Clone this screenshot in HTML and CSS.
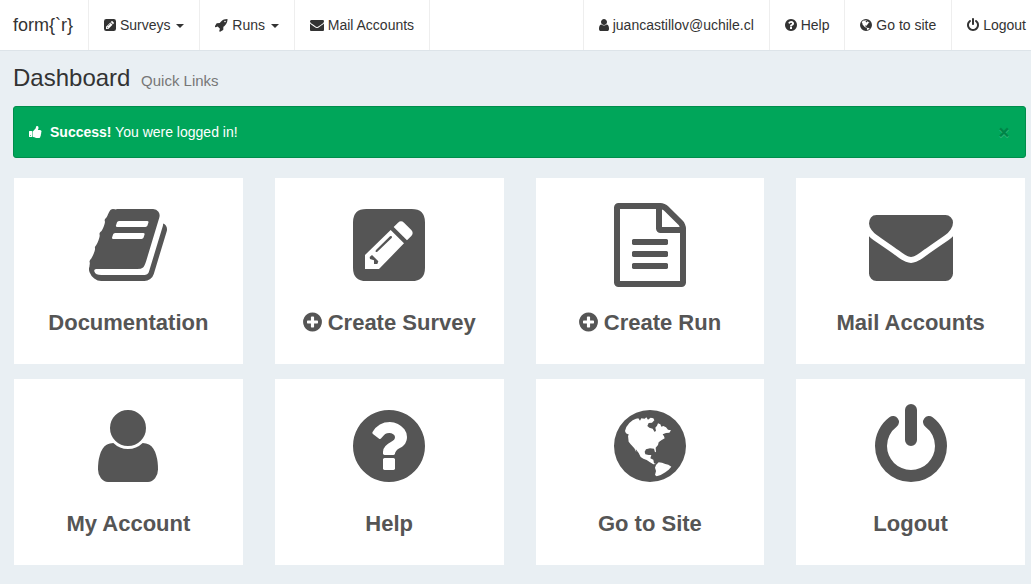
FILE: index.html
```html
<!DOCTYPE html>
<html lang="en">
<head>
<meta charset="utf-8">
<meta name="viewport" content="width=device-width, initial-scale=1">
<title>form{`r} Dashboard</title>
<link rel="stylesheet" href="styles.css">
</head>
<body>
<svg class="sprite" aria-hidden="true">
  <symbol id="book" viewBox="64 0 1664 1792"><path d="M1703 478q40 57 18 129l-275 906q-19 64-76.500 107.500t-122.500 43.500h-923q-77 0-148.500-53.500t-99.500-131.500q-24-67-2-127 0-4 3-27t4-37q1-8-3-21.500t-3-19.500q2-11 8-21t16.500-23.500 16.500-23.500q23-38 45-91.500t30-91.500q3-10 .5-30t-.5-28q3-11 17-28t17-23q21-36 42-92t25-90q1-9-2.500-32t.5-28q4-13 22-30.500t22-22.500q19-26 42.500-84.500t27.500-96.500q1-8-3-25.500t-2-26.500q2-8 9-18t18-23 17-21q8-12 16.500-30.500t15-35 16-36 19.500-32 26.500-23.500 36-11.500 47.500 5.500l-1 3q38-9 51-9h761q74 0 114 56t18 130l-274 906q-36 119-71.500 153.500t-128.500 34.500h-869q-27 0-38 15-11 16-1 43 24 70 144 70h923q29 0 56-15.500t35-41.500l300-987q7-22 5-57 38 15 59 43zm-1064 2q-4 13 2 22.500t20 9.500h608q13 0 25.500-9.500t16.500-22.500l21-64q4-13-2-22.500t-20-9.500h-608q-13 0-25.500 9.500t-16.500 22.500zm-83 256q-4 13 2 22.500t20 9.500h608q13 0 25.500-9.500t16.500-22.500l21-64q4-13-2-22.500t-20-9.500h-608q-13 0-25.500 9.500t-16.500 22.500z"/></symbol>
  <symbol id="pencil" viewBox="280 39 216 252"><path fill-rule="evenodd" d="M320 57H456Q496 57 496 97V233Q496 273 456 273H320Q280 273 280 233V97Q280 57 320 57ZM316 195V237H358L433 160L393 120ZM402 111L442 151L455 138Q463 129 455 120L433 98Q424 90 415 98ZM349 180L391 139Q394 137 396 139Q398 141 396 144L353 185Q350 187 348 185Q347 183 349 180ZM337 195L356 214L353 222H343V211L331 207L330 201Z"/></symbol>
  <symbol id="file" viewBox="128 0 1536 1792"><path d="M1596 380q28 28 48 76t20 88v1152q0 40-28 68t-68 28h-1344q-40 0-68-28t-28-68v-1600q0-40 28-68t68-28h896q40 0 88 20t76 48zm-444-244v376h376q-10-29-22-41l-313-313q-12-12-41-22zm384 1528v-1024h-416q-40 0-68-28t-28-68v-416h-768v1536h1280zm-1024-864q0-14 9-23t23-9h704q14 0 23 9t9 23v64q0 14-9 23t-23 9h-704q-14 0-23-9t-9-23v-64zm736 224q14 0 23 9t9 23v64q0 14-9 23t-23 9h-704q-14 0-23-9t-9-23v-64q0-14 9-23t23-9h704zm0 256q14 0 23 9t9 23v64q0 14-9 23t-23 9h-704q-14 0-23-9t-9-23v-64q0-14 9-23t23-9h704z"/></symbol>
  <symbol id="envelope" viewBox="0 0 1792 1792"><path d="M1792 710v794q0 66-47 113t-113 47h-1472q-66 0-113-47t-47-113v-794q44 49 101 87 362 246 497 345 57 42 92.500 65.500t94.500 48 110 24.500h2q51 0 110-24.500t94.500-48 92.500-65.500q170-123 498-345 57-39 100-87zm0-294q0 79-49 151t-122 123q-376 261-468 325-10 7-42.500 30.500t-54 38-52 32.500-57.500 27-50 9h-2q-23 0-50-9t-57.500-27-52-32.500-54-38-42.500-30.500q-91-64-262-182.500t-205-142.500q-62-42-117-115.500t-55-136.500q0-78 41.500-130t118.500-52h1472q65 0 112.500 47t47.500 113z"/></symbol>
  <symbol id="user" viewBox="256 0 1280 1792"><path d="M1536 1399q0 109-62.500 187t-150.500 78h-854q-88 0-150.500-78t-62.500-187q0-85 8.500-160.500t31.500-152 58.500-131 94-89 134.500-34.500q131 128 313 128t313-128q76 0 134.500 34.500t94 89 58.500 131 31.500 152 8.500 160.500zm-256-887q0 159-112.500 271.500t-271.500 112.500-271.500-112.500-112.500-271.500 112.500-271.500 271.500-112.500 271.500 112.500 112.500 271.500z"/></symbol>
  <symbol id="question" viewBox="128 0 1536 1792"><path d="M1024 1376v-192q0-14-9-23t-23-9h-192q-14 0-23 9t-9 23v192q0 14 9 23t23 9h192q14 0 23-9t9-23zm256-672q0-88-55.500-163t-138.500-116-170-41q-243 0-371 213-15 24 8 42l132 100q7 6 19 6 16 0 25-12 53-68 86-92 34-24 86-24 48 0 85.500 26t37.500 59q0 38-20 61t-68 45q-63 28-115.500 86.500t-52.500 125.500v36q0 14 9 23t23 9h192q14 0 23-9t9-23q0-19 21.500-49.500t54.500-49.500q32-18 49-28.500t46-35 44.500-48 28-60.500 12.500-81zm384 192q0 209-103 385.500t-279.500 279.500-385.500 103-385.500-103-279.500-279.500-103-385.500 103-385.500 279.500-279.500 385.500-103 385.500 103 279.500 279.500 103 385.500z"/></symbol>
  <symbol id="globe" viewBox="42 27 216 252"><path fill-rule="evenodd" d="M150 45A108 108 0 1 1 150 261A108 108 0 1 1 150 45ZM75 108L79 96L88 84L98 76L108 71L115 70L120 77L124 70L134 71L139 67L144 74L152 68L160 70L163 76L156 83L146 84L142 93L148 98L158 101L164 111L168 107L166 98L171 92L174 85L181 88L184 95L190 93L198 97L204 104L213 106L208 113L198 114L188 118L192 124L194 130L184 136L176 142L174 150L167 158L168 170L165 172L162 161L150 160L138 163L134 170L136 178L146 180L154 180L151 190L160 194L162 205L168 207L160 208L150 202L140 195L130 191L122 186L116 174L107 162L109 172L103 160L92 148L86 140L84 122L87 119L78 115ZM168 210L176 202L186 203L196 207L205 209L214 215L206 224L196 232L182 240L170 244L165 240L168 228L165 218Z"/></symbol>
  <symbol id="power" viewBox="128 0 1536 1792"><path d="M1664 896q0 156-61 298t-164 245-245 164-298 61-298-61-245-164-164-245-61-298q0-182 80.500-343t226.500-270q43-32 95.500-25t83.500 50q32 42 24.500 94.500t-49.500 84.500q-98 74-151.500 181t-53.500 228q0 104 40.500 198.500t109.500 163.500 163.500 109.500 198.500 40.500 198.500-40.500 163.500-109.500 109.500-163.500 40.500-198.500q0-121-53.500-228t-151.500-181q-42-32-49.500-84.500t24.500-94.500q31-43 84-50t95 25q146 109 226.500 270t80.500 343zm-640-768v640q0 52-38 90t-90 38-90-38-38-90v-640q0-52 38-90t90-38 90 38 38 90z"/></symbol>
  <symbol id="plus" viewBox="128 0 1536 1792"><path d="M1344 960v-128q0-26-19-45t-45-19h-256v-256q0-26-19-45t-45-19h-128q-26 0-45 19t-19 45v256h-256q-26 0-45 19t-19 45v128q0 26 19 45t45 19h256v256q0 26 19 45t45 19h128q26 0 45-19t19-45v-256h256q26 0 45-19t19-45zm320-64q0 209-103 385.500t-279.500 279.500-385.500 103-385.500-103-279.500-279.500-103-385.500 103-385.500 279.500-279.500 385.500-103 385.500 103 279.500 279.500 103 385.500z"/></symbol>
  <symbol id="rocket" viewBox="64 0 1664 1792"><path d="M1440 448q0-40-28-68t-68-28-68 28-28 68 28 68 68 28 68-28 28-68zm224-288q0 249-75.500 430.500t-253.500 360.500q-81 80-195 176l-20 379q-2 16-16 26l-384 224q-7 4-16 4-12 0-23-9l-64-64q-13-14-8-32l85-276-281-281-276 85q-3 1-9 1-14 0-23-9l-64-64q-17-19-5-39l224-384q10-14 26-16l379-20q96-114 176-195 188-187 358-258t431-71q14 0 24 9.500t10 22.500z"/></symbol>
  <symbol id="thumb" viewBox="64 0 1664 1792"><path d="M320 1344q0-26-19-45t-45-19q-27 0-45.500 19t-18.500 45q0 27 18.500 45.500t45.500 18.500q26 0 45-18.500t19-45.500zm160-512v640q0 26-19 45t-45 19h-288q-26 0-45-19t-19-45v-640q0-26 19-45t45-19h288q26 0 45 19t19 45zm1184 0q0 86-55 149 15 44 15 76 3 76-43 137 17 56 0 117-15 57-54 94 9 112-49 181-64 76-197 78h-129q-66 0-144-15.500t-121.500-29-120.500-39.500q-123-43-158-44-26-1-45-19.500t-19-44.500v-641q0-25 18-43.500t43-20.500q24-2 76-59t101-121q68-87 101-120 18-18 31-48t17.500-48.500 13.500-60.500q7-39 12.500-61t19.500-52 34-50q19-19 45-19 46 0 82.500 10.500t60 26 40 40.500 24 45 12 50 5 45 .5 39q0 38-9.500 76t-19 60-27.500 56q-3 6-10 18t-11 22-8 24h277q78 0 135 57t57 135z"/></symbol>
</svg>

<header class="topbar">
  <a class="brand" href="#">form{`r}</a>
  <nav class="menu" aria-label="Main">
    <button class="item" type="button" aria-haspopup="true"><svg class="icon"><use href="#pencil"/></svg> Surveys <span class="caret"></span></button>
    <button class="item" type="button" aria-haspopup="true"><svg class="icon icon-wide"><use href="#rocket"/></svg> Runs <span class="caret"></span></button>
    <a class="item" href="#"><svg class="icon icon-full"><use href="#envelope"/></svg> Mail Accounts</a>
  </nav>
  <nav class="menu menu-right" aria-label="Account">
    <a class="item" href="#"><svg class="icon icon-narrow"><use href="#user"/></svg> juancastillov@uchile.cl</a>
    <a class="item" href="#"><svg class="icon"><use href="#question"/></svg> Help</a>
    <a class="item" href="#"><svg class="icon"><use href="#globe"/></svg> Go to site</a>
    <a class="item" href="#"><svg class="icon"><use href="#power"/></svg> Logout</a>
  </nav>
</header>

<main class="content">
  <h1 class="heading">Dashboard <small class="subheading">Quick Links</small></h1>

  <div class="alert" role="alert">
    <svg class="icon icon-wide"><use href="#thumb"/></svg>
    <p class="message"><strong>Success!</strong> You were logged in!</p>
    <button class="close" type="button" aria-label="Close">×</button>
  </div>

  <div class="tiles">
    <a class="tile" href="#"><svg class="picture"><use href="#book"/></svg><h2 class="title">Documentation</h2></a>
    <a class="tile" href="#"><svg class="picture"><use href="#pencil"/></svg><h2 class="title"><svg class="title-icon"><use href="#plus"/></svg> Create Survey</h2></a>
    <a class="tile" href="#"><svg class="picture"><use href="#file"/></svg><h2 class="title"><svg class="title-icon"><use href="#plus"/></svg> Create Run</h2></a>
    <a class="tile" href="#"><svg class="picture"><use href="#envelope"/></svg><h2 class="title">Mail Accounts</h2></a>
    <a class="tile" href="#"><svg class="picture"><use href="#user"/></svg><h2 class="title">My Account</h2></a>
    <a class="tile" href="#"><svg class="picture"><use href="#question"/></svg><h2 class="title">Help</h2></a>
    <a class="tile" href="#"><svg class="picture"><use href="#globe"/></svg><h2 class="title">Go to Site</h2></a>
    <a class="tile" href="#"><svg class="picture"><use href="#power"/></svg><h2 class="title">Logout</h2></a>
  </div>
</main>
</body>
</html>
```
FILE: styles.css
```css
* { box-sizing: border-box; }

body {
  margin: 0;
  background: #e9eff3;
  color: #333;
  font: 14px/20px "Liberation Sans", Arial, sans-serif;
}

a { color: inherit; text-decoration: none; }
svg { fill: currentColor; }
.sprite { display: none; }

.icon { width: 12px; height: 14px; vertical-align: -2px; }
.icon-narrow { width: 10px; }
.icon-wide { width: 13px; }
.icon-full { width: 14px; }

.topbar {
  display: flex;
  background: #fff;
  border-bottom: 1px solid #dde4e9;
}
.brand { padding: 15px 15px 15px 13px; font-size: 18px; }
.menu { display: flex; }
.item {
  padding: 15px;
  border: 0;
  border-left: 1px solid #eee;
  background: none;
  color: inherit;
  font: inherit;
  white-space: nowrap;
  cursor: pointer;
}
.menu:not(.menu-right) .item:last-child { border-right: 1px solid #eee; }
.menu-right { margin-left: auto; }
.menu-right .item:last-child { padding-right: 5px; }
.caret {
  display: inline-block;
  margin-left: 2px;
  border: 4px solid transparent;
  border-top-color: currentColor;
  border-bottom: 0;
  vertical-align: middle;
}

.content { padding: 14px 5px 20px 13px; }
.heading {
  margin: 0 0 15px;
  font-size: 24px;
  font-weight: 400;
  line-height: 26px;
}
.subheading { margin-left: 4px; color: #777; font-size: 15px; line-height: 1; }

.alert {
  display: flex;
  align-items: center;
  gap: 8px;
  margin-bottom: 20px;
  padding: 15px;
  border: 1px solid #008d4c;
  border-radius: 3px;
  background: #00a65a;
  color: #fff;
}
.message { flex: 1; margin: 0; }
.close {
  padding: 0;
  border: 0;
  background: none;
  color: #000;
  font: bold 21px/20px "Open Sans", "Liberation Sans", sans-serif;
  text-shadow: 0 1px 0 #fff;
  opacity: .2;
  cursor: pointer;
}

.tiles {
  display: grid;
  grid-template-columns: repeat(4, 1fr);
  gap: 15px 32px;
  padding: 0 1px;
}
.tile {
  display: flex;
  flex-direction: column;
  align-items: center;
  padding: 25px 10px 29px;
  background: #fff;
  color: #555;
}
.picture { width: 84px; height: 84px; margin-bottom: 24px; }
.title { margin: 0; font-size: 22px; line-height: 24px; text-align: center; }
.title-icon { width: 19px; height: 22px; vertical-align: -3px; }
```
